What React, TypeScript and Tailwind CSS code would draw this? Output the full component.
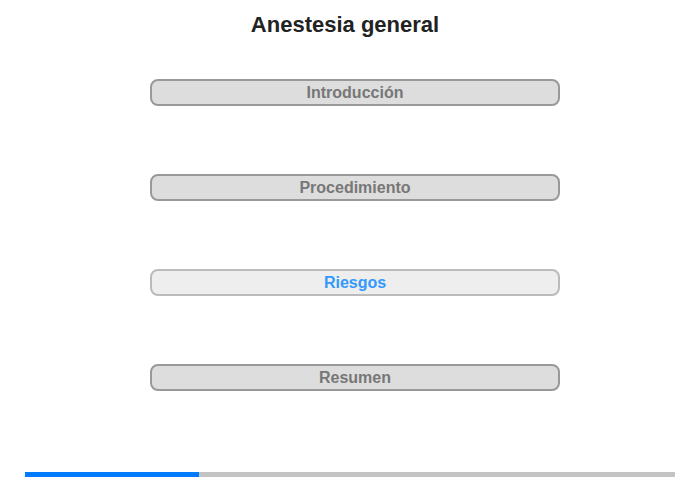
const sections = [
  { label: "Introducción", active: false },
  { label: "Procedimiento", active: false },
  { label: "Riesgos", active: true },
  { label: "Resumen", active: false },
]

function SectionButton({ label, active }: { label: string; active: boolean }) {
  return (
    <button
      className={
        active
          ? "h-[27px] w-full rounded-[8px] border-2 border-[#bbbbbb] bg-[#eeeeee] text-[16px] font-bold leading-[23px] text-[#3399ff]"
          : "h-[27px] w-full rounded-[8px] border-2 border-[#999999] bg-[#dddddd] text-[16px] font-bold leading-[23px] text-[#777777]"
      }
    >
      {label}
    </button>
  )
}

export default function App() {
  return (
    <div className="h-[480px] w-[700px] bg-white font-['Liberation_Sans',Arial,sans-serif]">
      <h1 className="pt-3 pr-[10px] text-center text-[22px] font-bold leading-[26px] text-[#222222]">
        Anestesia general
      </h1>
      <div className="ml-[150px] mt-[41px] flex w-[410px] flex-col gap-[68px]">
        {sections.map((s) => (
          <SectionButton key={s.label} label={s.label} active={s.active} />
        ))}
      </div>
      <div className="ml-[25px] mt-[81px] flex h-[5px] w-[650px] bg-[#c4c4c4]">
        <div className="h-full w-[174px] bg-[#007bff]" />
      </div>
    </div>
  )
}
